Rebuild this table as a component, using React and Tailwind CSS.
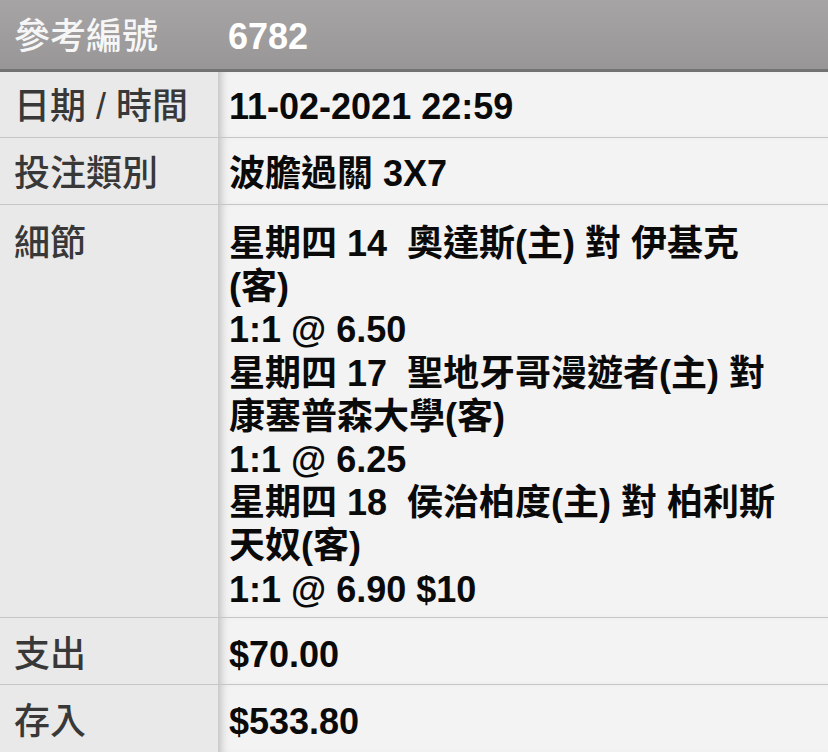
import React from "react";

function Row({ label, children, rowCls, padCls }) {
  return (
    <div className={`flex ${rowCls}`}>
      <div
        className={`w-[218px] shrink-0 bg-[#e9e9e9] pl-[14px] text-[#383838] text-[36px] leading-[1.2] font-medium ${padCls}`}
      >
        {label}
      </div>
      <div
        className={`flex-1 bg-[#f3f3f3] pl-[11px] pr-[40px] text-[36px] leading-[1.2] font-bold text-[#0a0a0a] whitespace-pre-wrap shadow-[inset_9px_0_8px_-6px_rgba(0,0,0,0.22)] ${padCls}`}
      >
        {children}
      </div>
    </div>
  );
}

export default function App() {
  return (
    <div className="w-[828px] h-[752px] overflow-hidden bg-[#f3f3f3] font-['Liberation_Sans','Noto_Sans_CJK_TC',sans-serif]">
      <div className="h-[72px] flex bg-gradient-to-b from-[#a6a4a5] to-[#989697] border-b-[3px] border-[#727272] pt-[15px] text-[36px] leading-[1.2]">
        <div className="w-[218px] shrink-0 pl-[14px] text-[#f6f6f6] font-medium">參考編號</div>
        <div className="pl-[10px] font-bold text-white">6782</div>
      </div>
      <Row label="日期 / 時間" rowCls="h-[66px] border-b border-[#c6c6c6]" padCls="pt-[13px]">
        11-02-2021 22:59
      </Row>
      <Row label="投注類別" rowCls="h-[67px] border-b border-[#c6c6c6]" padCls="pt-[14px]">
        波膽過關 3X7
      </Row>
      <Row label="細節" rowCls="h-[413px] border-b border-[#c6c6c6]" padCls="pt-[17px]">
        {"星期四 14  奧達斯(主) 對 伊基克(客)\n1:1 @ 6.50\n星期四 17  聖地牙哥漫遊者(主) 對 康塞普森大學(客)\n1:1 @ 6.25\n星期四 18  侯治柏度(主) 對 柏利斯天奴(客)\n1:1 @ 6.90 $10"}
      </Row>
      <Row label="支出" rowCls="h-[67px] border-b border-[#c6c6c6]" padCls="pt-[15px]">
        $70.00
      </Row>
      <Row label="存入" rowCls="h-[67px]" padCls="pt-[15px]">
        $533.80
      </Row>
    </div>
  );
}
